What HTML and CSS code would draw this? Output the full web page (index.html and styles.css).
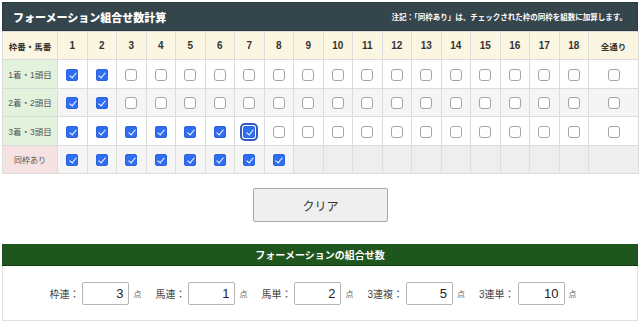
FILE: index.html
```html
<!DOCTYPE html>
<html lang="ja">
<head>
<meta charset="utf-8">
<title>フォーメーション組合せ数計算</title>
<link rel="stylesheet" href="styles.css">
</head>
<body>
<div class="wrap">
  <div class="title-bar">
    <span class="title">フォーメーション組合せ数計算</span>
    <span class="note">注記：「同枠あり」は、チェックされた枠の同枠を組数に加算します。</span>
  </div>
  <table class="grid">
    <colgroup>
      <col class="c-label">
      <col class="c-num"><col class="c-num"><col class="c-num"><col class="c-num"><col class="c-num"><col class="c-num">
      <col class="c-num"><col class="c-num"><col class="c-num"><col class="c-num"><col class="c-num"><col class="c-num">
      <col class="c-num"><col class="c-num"><col class="c-num"><col class="c-num"><col class="c-num"><col class="c-num">
      <col class="c-all">
    </colgroup>
    <thead>
      <tr class="head">
        <th class="hlabel">枠番・馬番</th>
        <th>1</th><th>2</th><th>3</th><th>4</th><th>5</th><th>6</th><th>7</th><th>8</th><th>9</th>
        <th>10</th><th>11</th><th>12</th><th>13</th><th>14</th><th>15</th><th>16</th><th>17</th><th>18</th>
        <th class="hall">全通り</th>
      </tr>
    </thead>
    <tbody>
      <tr class="odd">
        <td class="label green">1着・1頭目</td>
        <td><input type="checkbox" checked></td><td><input type="checkbox" checked></td>
        <td><input type="checkbox"></td><td><input type="checkbox"></td><td><input type="checkbox"></td>
        <td><input type="checkbox"></td><td><input type="checkbox"></td><td><input type="checkbox"></td>
        <td><input type="checkbox"></td><td><input type="checkbox"></td><td><input type="checkbox"></td>
        <td><input type="checkbox"></td><td><input type="checkbox"></td><td><input type="checkbox"></td>
        <td><input type="checkbox"></td><td><input type="checkbox"></td><td><input type="checkbox"></td>
        <td><input type="checkbox"></td><td><input type="checkbox"></td>
      </tr>
      <tr class="even">
        <td class="label green">2着・2頭目</td>
        <td><input type="checkbox" checked></td><td><input type="checkbox" checked></td>
        <td><input type="checkbox"></td><td><input type="checkbox"></td><td><input type="checkbox"></td>
        <td><input type="checkbox"></td><td><input type="checkbox"></td><td><input type="checkbox"></td>
        <td><input type="checkbox"></td><td><input type="checkbox"></td><td><input type="checkbox"></td>
        <td><input type="checkbox"></td><td><input type="checkbox"></td><td><input type="checkbox"></td>
        <td><input type="checkbox"></td><td><input type="checkbox"></td><td><input type="checkbox"></td>
        <td><input type="checkbox"></td><td><input type="checkbox"></td>
      </tr>
      <tr class="odd">
        <td class="label green">3着・3頭目</td>
        <td><input type="checkbox" checked></td><td><input type="checkbox" checked></td>
        <td><input type="checkbox" checked></td><td><input type="checkbox" checked></td><td><input type="checkbox" checked></td>
        <td><input type="checkbox" checked></td><td><input type="checkbox" class="focused" checked></td><td><input type="checkbox"></td>
        <td><input type="checkbox"></td><td><input type="checkbox"></td><td><input type="checkbox"></td>
        <td><input type="checkbox"></td><td><input type="checkbox"></td><td><input type="checkbox"></td>
        <td><input type="checkbox"></td><td><input type="checkbox"></td><td><input type="checkbox"></td>
        <td><input type="checkbox"></td><td><input type="checkbox"></td>
      </tr>
      <tr class="even">
        <td class="label pink">同枠あり</td>
        <td><input type="checkbox" checked></td><td><input type="checkbox" checked></td>
        <td><input type="checkbox" checked></td><td><input type="checkbox" checked></td><td><input type="checkbox" checked></td>
        <td><input type="checkbox" checked></td><td><input type="checkbox" checked></td><td><input type="checkbox" checked></td>
        <td class="empty"></td><td class="empty"></td><td class="empty"></td><td class="empty"></td>
        <td class="empty"></td><td class="empty"></td><td class="empty"></td><td class="empty"></td>
        <td class="empty"></td><td class="empty"></td><td class="empty"></td>
      </tr>
    </tbody>
  </table>

  <div class="actions">
    <button type="button" class="clear">クリア</button>
  </div>

  <div class="result">
    <div class="result-head">フォーメーションの組合せ数</div>
    <div class="result-body">
      <div class="item"><span class="lbl">枠連：</span><input class="num" type="text" value="3"><span class="pt">点</span></div>
      <div class="item"><span class="lbl">馬連：</span><input class="num" type="text" value="1"><span class="pt">点</span></div>
      <div class="item"><span class="lbl">馬単：</span><input class="num" type="text" value="2"><span class="pt">点</span></div>
      <div class="item"><span class="lbl">3連複：</span><input class="num" type="text" value="5"><span class="pt">点</span></div>
      <div class="item"><span class="lbl">3連単：</span><input class="num" type="text" value="10"><span class="pt">点</span></div>
    </div>
  </div>
</div>
</body>
</html>
```

FILE: styles.css
```css
* { box-sizing: border-box; }

html, body {
  margin: 0;
  padding: 0;
  background: #ffffff;
}

body {
  padding: 2px;
  font-family: "Liberation Sans", "Noto Sans CJK JP", sans-serif;
  color: #333333;
}

.wrap {
  width: 636px;
}

.title-bar {
  height: 29px;
  background: #35454c;
  color: #ffffff;
  display: flex;
  align-items: center;
  justify-content: space-between;
  padding: 0 10px 0 10px;
  border: 1px solid #2c3a40;
}

.title {
  font-size: 11px;
  font-weight: 900;
}

.note {
  font-size: 7.5px;
  font-weight: bold;
}

.grid {
  width: 636px;
  border-collapse: collapse;
  table-layout: fixed;
}

.c-label { width: 55px; }
.c-num { width: 29.5px; }
.c-all { width: 50px; }

.grid th,
.grid td {
  border: 1px solid #dcdcdc;
  padding: 0;
  text-align: center;
  vertical-align: middle;
}

.head th {
  height: 28px;
  background: #fbf6e2;
  font-size: 10px;
  font-weight: bold;
  color: #333333;
}

.head .hlabel,
.head .hall {
  font-size: 8.5px;
}

.grid tbody td {
  height: 28.5px;
}

.odd td { background: #ffffff; }
.even td { background: #f5f5f5; }

.grid td.label {
  font-size: 8.5px;
  color: #555555;
}

.grid td.green { background: #e3f2dc; }
.grid td.pink { background: #f6e2e2; font-size: 8px; }
.grid td.empty { background: #eeeeee; }

.grid input[type="checkbox"] {
  -webkit-appearance: none;
  appearance: none;
  position: relative;
  display: inline-block;
  width: 12px;
  height: 12px;
  margin: 0;
  vertical-align: middle;
  background: #ffffff;
  border: 1px solid #a5a5a5;
  border-radius: 3px;
}

.grid input[type="checkbox"]:checked {
  background: #2f6df2;
  border-color: #2a63dc;
  border-radius: 2px;
}

.grid input[type="checkbox"]:checked::after {
  content: "";
  position: absolute;
  left: 3.5px;
  top: 1px;
  width: 3px;
  height: 6px;
  border: solid #ffffff;
  border-width: 0 1.6px 1.6px 0;
  transform: rotate(40deg);
}

.grid input.focused {
  outline: 2px solid #3557c0;
  outline-offset: 1px;
  border-radius: 2px;
}

.actions {
  display: flex;
  justify-content: center;
  padding: 14px 0 22px 0;
}

.clear {
  width: 135px;
  height: 34px;
  margin-left: 1px;
  background: #efefef;
  border: 1px solid #a9a9a9;
  border-radius: 2px;
  font-family: "Liberation Sans", "Noto Sans CJK JP", sans-serif;
  font-size: 12px;
  color: #333333;
}

.result-head {
  height: 22px;
  background: #1f561d;
  border-bottom: 1px solid #113a10;
  color: #ffffff;
  font-size: 10px;
  font-weight: bold;
  display: flex;
  align-items: center;
  justify-content: center;
}

.result-body {
  height: 55px;
  border: 1px solid #e0e0e0;
  border-top: none;
  display: flex;
  align-items: center;
  justify-content: center;
  gap: 14px;
  padding-right: 14px;
}

.item {
  display: flex;
  align-items: center;
}

.lbl {
  font-size: 10px;
  color: #444444;
  margin-right: 3px;
}

.num {
  width: 47px;
  height: 23px;
  border: 1px solid #b5b5b5;
  border-radius: 2px;
  padding: 0 5px 0 0;
  text-align: right;
  font-family: "Liberation Sans", sans-serif;
  font-size: 13px;
  color: #222222;
}

.pt {
  font-size: 8px;
  color: #666666;
  margin-left: 4px;
}
```
